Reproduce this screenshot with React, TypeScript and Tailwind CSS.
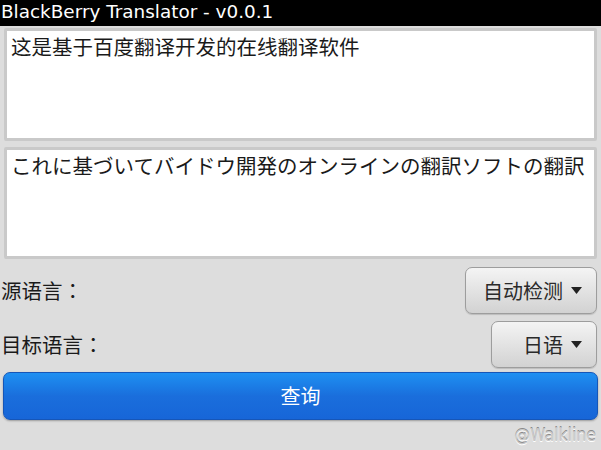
const cjk = "font-['DejaVu_Sans','Noto_Sans_CJK_SC',sans-serif]"

function Caret() {
  return (
    <svg width="11" height="7" viewBox="0 0 11 7" className="ml-2">
      <path d="M0 0 L11 0 L5.5 7 Z" fill="#222" />
    </svg>
  )
}

function Dropdown({ label, width }: { label: string; width: string }) {
  return (
    <div
      className={`flex items-center justify-end pr-[14px] h-[47px] ${width} rounded-[7px] border border-[#9d9d9d] bg-gradient-to-b from-[#f4f4f4] to-[#d2d2d2] shadow-[0_1px_1px_rgba(0,0,0,0.15)] text-[20px] text-[#2a2a2a]`}
    >
      <span>{label}</span>
      <Caret />
    </div>
  )
}

function Label({ text }: { text: string }) {
  return (
    <span className="text-[20.5px] text-[#1a1a1a]">
      {text}
      <span className="font-['Noto_Sans_CJK_JP',sans-serif]">：</span>
    </span>
  )
}

export default function App() {
  return (
    <div className={`w-[601px] h-[450px] bg-[#dddddd] flex flex-col ${cjk}`}>
      <div className="h-[26px] bg-black text-white text-[18.4px] leading-[24px] pl-[1px] font-['DejaVu_Sans',sans-serif]">
        BlackBerry Translator - v0.0.1
      </div>
      <div className="flex flex-col gap-[6px] px-[4px] pt-[2px]">
        <div className="h-[113px] bg-white border-[3px] border-[#c9c9c9] rounded-[2px] px-[4px] text-[20.5px] leading-[30px] text-[#1a1a1a] font-['Noto_Sans_CJK_SC',sans-serif]">
          这是基于百度翻译开发的在线翻译软件
        </div>
        <div className="h-[112px] bg-white border-[3px] border-[#c9c9c9] rounded-[2px] px-[4px] text-[20.5px] leading-[30px] text-[#1a1a1a] whitespace-nowrap overflow-hidden font-['Noto_Sans_CJK_JP',sans-serif]">
          これに基づいてバイドウ開発のオンラインの翻訳ソフトの翻訳
        </div>
      </div>
      <div className="flex items-center justify-between pl-[1px] pr-[4px] mt-[8px] font-['Noto_Sans_CJK_SC',sans-serif]">
        <Label text="源语言" />
        <Dropdown label="自动检测" width="w-[132px]" />
      </div>
      <div className="flex items-center justify-between pl-[1px] pr-[4px] mt-[7px] font-['Noto_Sans_CJK_SC',sans-serif]">
        <Label text="目标语言" />
        <Dropdown label="日语" width="w-[106px]" />
      </div>
      <div className="mx-[3px] mt-[4px] h-[48px] rounded-[7px] border border-[#1656b8] bg-gradient-to-b from-[#1f90f2] via-[#1a6edc] to-[#1766d8] flex items-center justify-center text-white text-[20px] shadow-[0_1px_2px_rgba(0,0,0,0.3)] font-['Noto_Sans_CJK_SC',sans-serif]">
        查询
      </div>
      <div className="flex justify-end pr-[5px] mt-[2px]">
        <span className="text-[17.5px] text-[#c8c8c8] [text-shadow:0_1px_0_#fff,0_-1px_0_#8a8a8a] font-['DejaVu_Sans_Condensed','DejaVu_Sans',sans-serif]">
          @Walkline
        </span>
      </div>
    </div>
  )
}
